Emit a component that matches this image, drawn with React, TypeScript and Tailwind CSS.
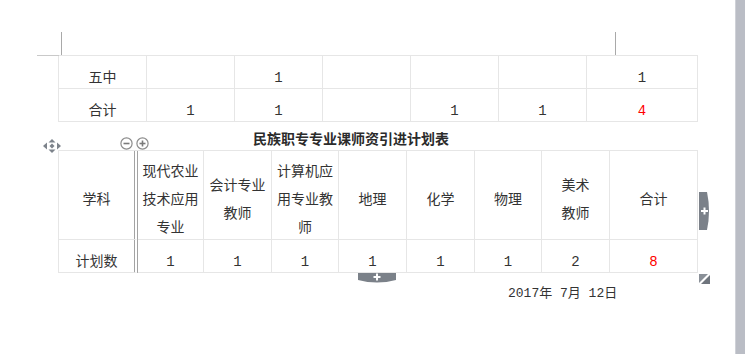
import React from "react";

const font = "font-['Liberation_Mono','Noto_Sans_CJK_SC',monospace]";

type Cell = { text?: string; red?: boolean };

const topCols = "grid-cols-[88px_88px_88px_88px_88px_88px_111px]";
const planCols = "grid-cols-[79px_66px_68px_67px_68px_68px_67px_68px_88px]";

const topRows: Cell[][] = [
  [{ text: "五中" }, {}, { text: "1" }, {}, {}, {}, { text: "1" }],
  [{ text: "合计" }, { text: "1" }, { text: "1" }, {}, { text: "1" }, { text: "1" }, { text: "4", red: true }],
];

const headers: string[][] = [
  ["学科"],
  ["现代农业", "技术应用", "专业"],
  ["会计专业", "教师"],
  ["计算机应", "用专业教", "师"],
  ["地理"],
  ["化学"],
  ["物理"],
  ["美术", "教师"],
  ["合计"],
];

const counts: Cell[] = [
  { text: "计划数" },
  { text: "1" },
  { text: "1" },
  { text: "1" },
  { text: "1" },
  { text: "1" },
  { text: "1" },
  { text: "2" },
  { text: "8", red: true },
];

function MoveIcon() {
  return (
    <svg width="18" height="14" viewBox="0 0 18 14" fill="#7d838b">
      <polygon points="9,0 12.5,3.5 5.5,3.5" />
      <polygon points="9,14 12.5,10.5 5.5,10.5" />
      <polygon points="0,7 4,3.5 4,10.5" />
      <polygon points="18,7 14,3.5 14,10.5" />
      <polygon points="9,4.5 11.5,7 9,9.5 6.5,7" />
    </svg>
  );
}

function CircleBtn({ plus }: { plus?: boolean }) {
  return (
    <svg width="13" height="13" viewBox="0 0 13 13">
      <circle cx="6.5" cy="6.5" r="5.6" fill="white" stroke="#8c8c8c" strokeWidth="1.2" />
      <line x1="3.5" y1="6.5" x2="9.5" y2="6.5" stroke="#7a7a7a" strokeWidth="1.6" />
      {plus && <line x1="6.5" y1="3.5" x2="6.5" y2="9.5" stroke="#7a7a7a" strokeWidth="1.6" />}
    </svg>
  );
}

function SideTab() {
  return (
    <svg width="12" height="38" viewBox="0 0 12 38">
      <path d="M0 0 H8 Q12 19 8 38 H0 Z" fill="#7b8189" />
      <line x1="2" y1="19" x2="9" y2="19" stroke="white" strokeWidth="2" />
      <line x1="5.5" y1="15.5" x2="5.5" y2="22.5" stroke="white" strokeWidth="2" />
    </svg>
  );
}

function BottomTab() {
  return (
    <svg width="38" height="11" viewBox="0 0 38 11">
      <path d="M0 0 H38 V7 Q19 12 0 7 Z" fill="#7b8189" />
      <line x1="15.5" y1="4" x2="22.5" y2="4" stroke="white" strokeWidth="2" />
      <line x1="19" y1="0.5" x2="19" y2="7.5" stroke="white" strokeWidth="2" />
    </svg>
  );
}

function ResizeHandle() {
  return (
    <svg width="11" height="10" viewBox="0 0 11 10">
      <polygon points="0,0 9,0 0,9" fill="#8a9098" />
      <polygon points="11,1 11,10 2,10" fill="#6f757d" />
    </svg>
  );
}

export default function App() {
  return (
    <div className={`w-[745px] h-[354px] bg-white flex overflow-hidden text-[#333] ${font}`}>
      <div className="relative w-[735px] h-full">
        {/* page margin marks */}
        <div className="absolute left-[61px] top-[32px] w-px h-[23px] bg-[#a9a9a9]" />
        <div className="absolute left-[37px] top-[55px] w-[22px] h-px bg-[#c9c9c9]" />
        <div className="absolute left-[615px] top-[32px] w-px h-[23px] bg-[#a9a9a9]" />

        <div className="pt-[55px] pl-[58px]">
          <div className={`grid ${topCols} w-[640px] border-l border-t border-[#e6e6e6]`}>
            {topRows.flatMap((row, r) =>
              row.map((c, i) => (
                <div
                  key={`${r}-${i}`}
                  className={`h-[33px] border-r border-b border-[#e6e6e6] flex items-center justify-center pt-[11px] text-[14px] leading-[16px] ${
                    c.red ? "text-[#ff0000]" : ""
                  }`}
                >
                  {c.text}
                </div>
              ))
            )}
          </div>

          <div className="relative h-[28px] flex items-end pb-[2px]">
            <div className="absolute left-[-15px] top-[17px]">
              <MoveIcon />
            </div>
            <div className="absolute left-[62px] top-[15px] flex gap-[3px]">
              <CircleBtn />
              <CircleBtn plus />
            </div>
            <div className="pl-[195px] text-[14px] leading-[16px] font-bold text-[#2b2b2b]">
              民族职专专业课师资引进计划表
            </div>
          </div>

          <div className="relative w-[640px]">
            <div className={`grid ${planCols} border-l border-t border-[#e6e6e6]`}>
              {headers.map((lines, i) => (
                <div
                  key={`h${i}`}
                  className={`h-[89px] border-b border-[#e6e6e6] flex items-center justify-center pt-[10px] text-[14px] leading-[28px] text-center ${
                    i === 0 ? "border-r-4 border-r-[#a3a3a3] border-double" : "border-r"
                  }`}
                >
                  <div>
                    {lines.map((l, k) => (
                      <div key={k}>{l}</div>
                    ))}
                  </div>
                </div>
              ))}
              {counts.map((c, i) => (
                <div
                  key={`c${i}`}
                  className={`h-[33px] border-b border-[#e6e6e6] flex items-center justify-center pt-[11px] text-[14px] leading-[16px] ${
                    i === 0 ? "border-r-4 border-r-[#a3a3a3] border-double" : "border-r"
                  } ${c.red ? "text-[#ff0000]" : ""}`}
                >
                  {c.text}
                </div>
              ))}
            </div>
            <div className="absolute left-[641px] top-[42px]">
              <SideTab />
            </div>
            <div className="absolute left-[300px] top-[123px]">
              <BottomTab />
            </div>
            <div className="absolute left-[641px] top-[124px]">
              <ResizeHandle />
            </div>
          </div>

          <div className="pl-[450px] pt-[13px] text-[13px] leading-[16px] whitespace-pre">
            2017年 7月 12日
          </div>
        </div>
      </div>
      <div className="w-[10px] h-full bg-[#babdc5] border-l border-[#cfd1d7]" />
    </div>
  );
}
